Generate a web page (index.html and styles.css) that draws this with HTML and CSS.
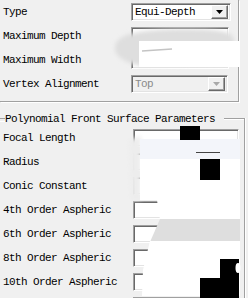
FILE: index.html
```html
<!DOCTYPE html>
<html lang="en">
<head>
  <meta charset="UTF-8">
  <title>Surface Parameters</title>
  <link rel="stylesheet" href="styles.css">
</head>
<body>
  <div class="panel">
    <section class="group group-main">
      <div class="row">
        <span class="label">Type</span>
        <div class="combo">
          <span class="combo-value">Equi-Depth</span>
          <span class="combo-btn"><svg width="7" height="4" viewBox="0 0 7 4"><path d="M0 0h7L3.5 4z" fill="currentColor"/></svg></span>
        </div>
      </div>
      <div class="row">
        <span class="label">Maximum Depth</span>
        <div class="field field-short"></div>
      </div>
      <div class="row">
        <span class="label">Maximum Width</span>
        <div class="field field-short"></div>
      </div>
      <div class="row">
        <span class="label">Vertex Alignment</span>
        <div class="combo combo-disabled">
          <span class="combo-value">Top</span>
          <span class="combo-btn"><svg width="7" height="4" viewBox="0 0 7 4"><path d="M0 0h7L3.5 4z" fill="currentColor"/></svg></span>
        </div>
      </div>
    </section>

    <section class="group group-poly">
      <div class="group-title"><span>Polynomial Front Surface Parameters</span></div>
      <div class="group-body">
        <div class="row"><span class="label">Focal Length</span><div class="field"></div></div>
        <div class="row"><span class="label">Radius</span><div class="field"></div></div>
        <div class="row"><span class="label">Conic Constant</span><div class="field"></div></div>
        <div class="row"><span class="label">4th Order Aspheric</span><div class="field"></div></div>
        <div class="row"><span class="label">6th Order Aspheric</span><div class="field"></div></div>
        <div class="row"><span class="label">8th Order Aspheric</span><div class="field"></div></div>
        <div class="row"><span class="label">10th Order Aspheric</span><div class="field"></div></div>
        <div class="row row-cut"><div class="field"></div></div>
      </div>
    </section>

    <!-- blotted-out areas of the captured dialog -->
    <svg class="blots" width="248" height="298" viewBox="0 0 248 298">
      <defs>
        <filter id="soft" x="-20%" y="-20%" width="140%" height="140%"><feGaussianBlur stdDeviation="2"/></filter>
      </defs>
      <path d="M115 47C116 34 140 29 185 29C222 29 234 32 234 40L234 64L140 66C124 62 114 56 115 47Z" fill="#dedede" filter="url(#soft)"/>
      <rect x="139" y="41" width="101" height="26" fill="#fff"/>
      <path d="M142 51L172 49" stroke="#c4c4c4" stroke-width="1.5"/>

      <path d="M129 140L141 136L141 200L131 200Z" fill="#ededed" filter="url(#soft)"/>
      <rect x="140" y="139" width="100" height="20" fill="#f3f5fa"/>
      <rect x="140" y="159" width="100" height="41" fill="#fff"/>
      <rect x="180" y="126" width="20" height="14" fill="#000"/>
      <path d="M196 152.5L220 152.5" stroke="#444"/>
      <rect x="200" y="159" width="20" height="21" fill="#000"/>

      <path d="M140 195L240 195L240 220L160 220L157 200L140 200Z" fill="#fff"/>
      <path d="M160 219L240 219L240 242L150 242Z" fill="#dedede"/>
      <path d="M150 241L240 241L240 296L142 296L143 270Z" fill="#fff"/>
      <path d="M220 259L239 259L239 298L200 298L200 278L220 278Z" fill="#000"/>
      <ellipse cx="238" cy="268" rx="2.5" ry="5" fill="#fff"/>
    </svg>
  </div>
</body>
</html>
```

FILE: styles.css
```css
* {
  margin: 0;
  padding: 0;
  box-sizing: border-box;
}

body {
  background: #f0f0f0;
  font-family: "Liberation Mono", "DejaVu Sans Mono", monospace;
  font-size: 11px;
  letter-spacing: -0.6px;
  color: #000;
}

.panel {
  position: relative;
  width: 248px;
  height: 298px;
  overflow: hidden;
}

.row {
  display: flex;
  align-items: center;
  height: 24px;
}

.label {
  white-space: nowrap;
}

/* last row only shows the top edge of its box */
.row-cut {
  padding-left: 130px;
}

/* etched frames: grey line with a white line outside it */
.group-main {
  width: 239px;
  padding: 0 0 5px 3px;
  border-right: 1px solid #a0a0a0;
  border-bottom: 1px solid #a0a0a0;
  box-shadow: 1px 1px 0 #fff;
}

.group-main .label {
  width: 128px;
}

.group-poly {
  width: 245px;
  margin-top: 10px;
}

.group-title {
  display: flex;
  height: 14px;
  line-height: 14px;
}

.group-title::before {
  content: "";
  width: 5px;
  margin-top: 6px;
  height: 2px;
  border-top: 1px solid #a0a0a0;
  border-bottom: 1px solid #fff;
}

.group-title span {
  padding-right: 9px;
  white-space: nowrap;
}

.group-title::after {
  content: "";
  flex: 1;
  margin-top: 6px;
  border-top: 1px solid #a0a0a0;
  border-right: 1px solid #a0a0a0;
  box-shadow: inset 0 1px 0 #fff, 1px 0 0 #fff;
}

.group-body {
  padding-left: 3px;
  border-right: 1px solid #a0a0a0;
  box-shadow: 1px 0 0 #fff;
}

.group-body .label {
  width: 130px;
}

/* sunken edit and combo boxes */
.field,
.combo {
  height: 18px;
  background: #fff;
  border: 1px solid;
  border-color: #a0a0a0 #fff #fff #a0a0a0;
  box-shadow: inset 1px 1px 0 #696969, inset -1px -1px 0 #e3e3e3;
}

.field {
  width: 106px;
}

.field-short {
  width: 98px;
}

.combo {
  display: flex;
  align-items: center;
  width: 100px;
  padding: 2px 2px 2px 3px;
}

.combo-value {
  flex: 1;
  line-height: 14px;
}

.combo-btn {
  display: flex;
  align-items: center;
  justify-content: center;
  width: 17px;
  height: 14px;
  background: #f0f0f0;
  color: #000;
  border: 1px solid;
  border-color: #fff #696969 #696969 #fff;
  box-shadow: inset -1px -1px 0 #a0a0a0;
}

.combo-disabled {
  width: 97px;
  background: #f0f0f0;
  color: #8a8a8a;
}

.combo-disabled .combo-btn {
  color: #a8a8a8;
}

.blots {
  position: absolute;
  left: 0;
  top: 0;
  pointer-events: none;
}
```
